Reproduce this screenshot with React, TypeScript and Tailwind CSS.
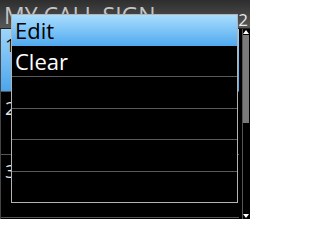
const rows = [
  { n: "1", active: true },
  { n: "2", active: false },
  { n: "3", active: false },
];

const menu = ["Edit", "Clear", "", "", "", ""];

export default function App() {
  return (
    <div
      className="relative w-[250px] h-[219px] overflow-hidden bg-black"
      style={{ fontFamily: '"Open Sans", "Noto Sans", sans-serif' }}
    >
      {/* Title bar */}
      <div className="flex h-[29px] items-start justify-between bg-gradient-to-b from-[#2e2e2e] to-[#585858] border-b border-[#222]">
        <span className="pl-[4px] pt-[1px] text-[23px] leading-[28px] text-[#c4c4c4]">
          MY CALL SIGN
        </span>
        <span className="pr-[2px] pt-[10px] text-[17px] leading-[20px] text-[#e8e8e8]">2</span>
      </div>

      {/* Background list + scrollbar */}
      <div className="flex h-[190px]">
        <div className="w-[239px] border-l border-[#444] flex flex-col">
          {rows.map((r) => (
            <div
              key={r.n}
              className={
                r.active
                  ? "h-[63px] border-b border-[#555] bg-gradient-to-b from-[#9dd5fb] to-[#4aa6ec] pl-[4px] pt-[4px] text-[19px] leading-[24px] text-black"
                  : "h-[63px] border-b border-[#555] pl-[4px] pt-[4px] text-[19px] leading-[24px] text-[#e6e6e6]"
              }
            >
              {r.n}
            </div>
          ))}
        </div>
        <div className="ml-[3px] flex w-[7px] flex-col border-l border-[#555] bg-black">
          <div className="flex h-[6px] items-center justify-center">
            <div className="h-0 w-0 border-x-[3px] border-b-[4px] border-x-transparent border-b-white" />
          </div>
          <div className="h-[88px] bg-[#7a7a7a]" />
          <div className="flex-1" />
          <div className="flex h-[6px] items-center justify-center">
            <div className="h-0 w-0 border-x-[3px] border-t-[4px] border-x-transparent border-t-white" />
          </div>
        </div>
      </div>

      {/* Popup menu */}
      <div className="absolute left-[11px] top-[14px] flex h-[189px] w-[227px] flex-col border border-[#b4b4b4] bg-black">
        {menu.map((m, i) => (
          <div
            key={i}
            className={
              i === 0
                ? "flex-1 bg-gradient-to-b from-[#a8ddfd] to-[#4ea9ef] pl-[3px] text-[22px] leading-[30px] text-black"
                : i === 1
                  ? "flex-1 pl-[3px] text-[22px] leading-[30px] text-white"
                  : "flex-1 border-t border-[#5a5a5a]"
            }
          >
            {m}
          </div>
        ))}
      </div>
    </div>
  );
}
